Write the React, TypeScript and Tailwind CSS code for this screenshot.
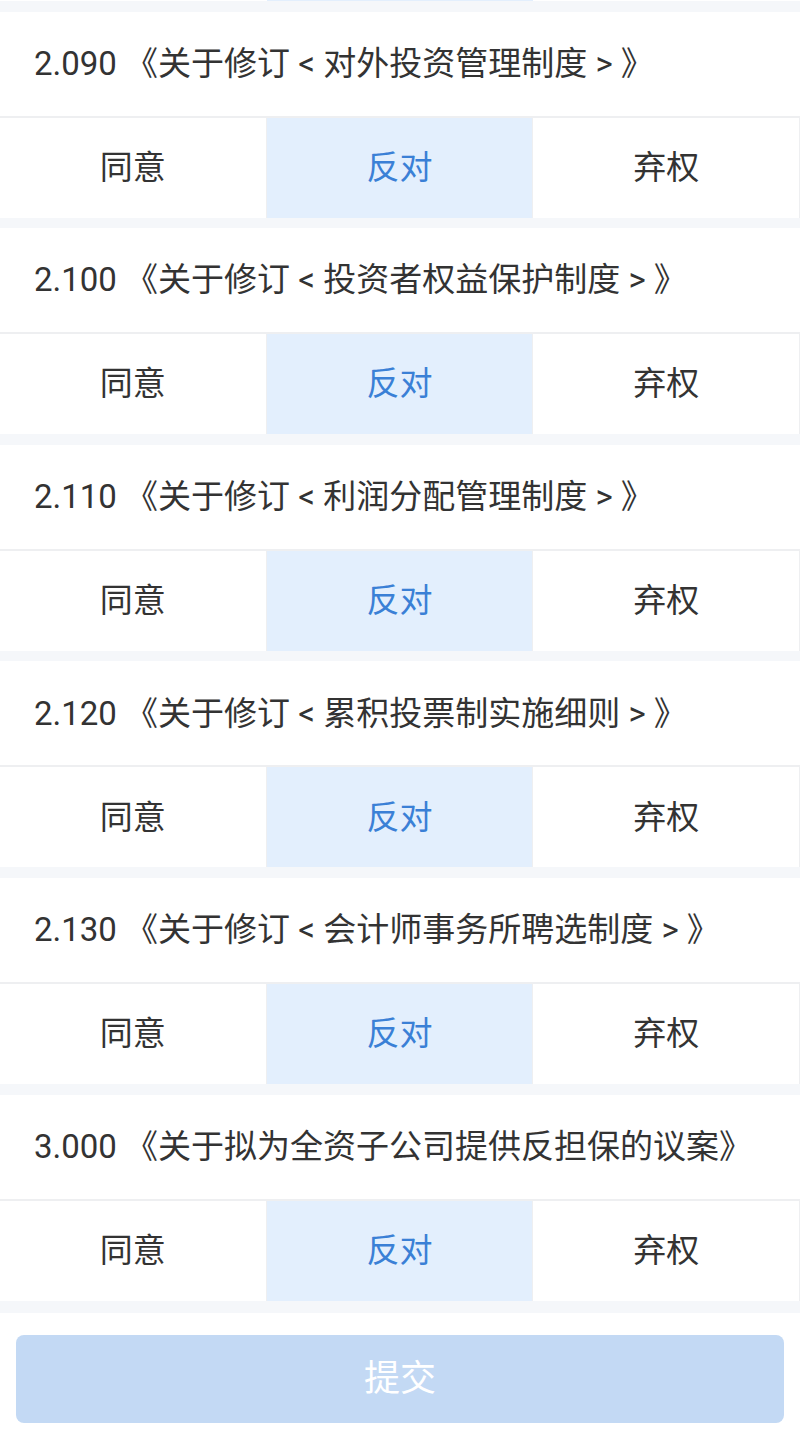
import React from "react";

const items = [
  "2.090 《关于修订 < 对外投资管理制度 > 》",
  "2.100 《关于修订 < 投资者权益保护制度 > 》",
  "2.110 《关于修订 < 利润分配管理制度 > 》",
  "2.120 《关于修订 < 累积投票制实施细则 > 》",
  "2.130 《关于修订 < 会计师事务所聘选制度 > 》",
  "3.000 《关于拟为全资子公司提供反担保的议案》",
];

const font = { fontFamily: 'Roboto, "Noto Sans CJK SC", sans-serif' };

function VoteRow() {
  return (
    <div className="flex border-t-2 border-[#eeeff1] h-[102px] text-[33px]">
      <div className="flex-1 flex items-center justify-center bg-white text-[#333333] border-r border-[#eeeff1]">
        同意
      </div>
      <div className="flex-1 flex items-center justify-center bg-[#e3effd] text-[#3a80d6] border-r border-[#eeeff1]">
        反对
      </div>
      <div className="flex-1 flex items-center justify-center bg-white text-[#333333] border-r border-[#eeeff1]">
        弃权
      </div>
    </div>
  );
}

export default function App() {
  return (
    <div className="w-[800px] h-[1432px] overflow-hidden bg-white" style={font}>
      {/* tail of the previous row */}
      <div className="flex h-px">
        <div className="flex-1 bg-white" />
        <div className="flex-1 bg-[#e3effd]" />
        <div className="flex-1 bg-white" />
      </div>

      {items.map((title) => (
        <div key={title}>
          <div className="h-[10.6px] bg-[#f5f7fa]" />
          <div className="h-[104px] flex items-center pl-[34px] bg-white text-[33px] text-[#333333] whitespace-pre">
            {title}
          </div>
          <VoteRow />
        </div>
      ))}

      <div className="h-[12px] bg-[#f5f7fa]" />

      {/* Submit */}
      <div className="px-4 pt-[22px]">
        <button className="w-full h-[88px] rounded-lg bg-[#c3d9f4] text-white text-[36px] flex items-center justify-center">
          提交
        </button>
      </div>
    </div>
  );
}
